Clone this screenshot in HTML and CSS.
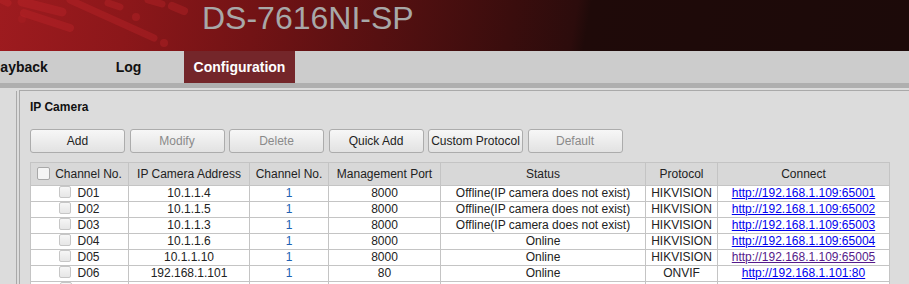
FILE: index.html
```html
<!DOCTYPE html>
<html lang="en">
<head>
    <meta charset="UTF-8">
    <title>DS-7616NI-SP</title>
    <link rel="stylesheet" href="styles.css">
</head>
<body>
    <header class="banner">
        <svg class="streaks" width="220" height="51" viewBox="0 0 220 51">
            <g stroke="#c8282d" stroke-linecap="round" fill="none" opacity="0.32">
                <line x1="22" y1="2" x2="62" y2="12" stroke-width="9"/>
                <line x1="24" y1="13" x2="70" y2="28" stroke-width="8"/>
                <line x1="70" y1="0" x2="154" y2="38" stroke-width="7"/>
                <line x1="108" y1="3" x2="120" y2="7" stroke-width="7"/>
                <line x1="148" y1="0" x2="162" y2="4" stroke-width="7"/>
                <line x1="172" y1="6" x2="184" y2="11" stroke-width="8"/>
                <line x1="2" y1="0" x2="8" y2="3" stroke-width="7"/>
            </g>
            <g fill="#c8282d" opacity="0.32">
                <circle cx="136" cy="17" r="4"/>
                <circle cx="164" cy="43" r="4"/>
                <circle cx="22" cy="19" r="4" opacity="0.5"/>
            </g>
        </svg>
        <h1 class="model">DS-7616NI-SP</h1>
    </header>

    <nav class="menu">
        <a class="tab">Playback</a>
        <a class="tab">Log</a>
        <a class="tab active">Configuration</a>
    </nav>
    <div class="menu-shadow"></div>

    <div class="workspace">
        <aside class="side"></aside>
        <main class="panel">
            <h2 class="panel-title">IP Camera</h2>
            <div class="toolbar">
                <button class="btn">Add</button>
                <button class="btn" disabled>Modify</button>
                <button class="btn" disabled>Delete</button>
                <button class="btn">Quick Add</button>
                <button class="btn">Custom Protocol</button>
                <button class="btn" disabled>Default</button>
            </div>
            <table class="cam-table">
                <colgroup>
                    <col style="width:98px">
                    <col style="width:121px">
                    <col style="width:79px">
                    <col style="width:112px">
                    <col style="width:205px">
                    <col style="width:72px">
                    <col style="width:172px">
                </colgroup>
                <thead>
                    <tr>
                        <th><span class="cb cb-head"></span>Channel No.</th>
                        <th>IP Camera Address</th>
                        <th>Channel No.</th>
                        <th>Management Port</th>
                        <th>Status</th>
                        <th>Protocol</th>
                        <th>Connect</th>
                    </tr>
                </thead>
                <tbody>
                    <tr>
                        <td><span class="cb"></span>D01</td>
                        <td>10.1.1.4</td>
                        <td class="chan">1</td>
                        <td>8000</td>
                        <td>Offline(IP camera does not exist)</td>
                        <td>HIKVISION</td>
                        <td class="connect"><a class="link">http://192.168.1.109:65001</a></td>
                    </tr>
                    <tr>
                        <td><span class="cb"></span>D02</td>
                        <td>10.1.1.5</td>
                        <td class="chan">1</td>
                        <td>8000</td>
                        <td>Offline(IP camera does not exist)</td>
                        <td>HIKVISION</td>
                        <td class="connect"><a class="link">http://192.168.1.109:65002</a></td>
                    </tr>
                    <tr>
                        <td><span class="cb"></span>D03</td>
                        <td>10.1.1.3</td>
                        <td class="chan">1</td>
                        <td>8000</td>
                        <td>Offline(IP camera does not exist)</td>
                        <td>HIKVISION</td>
                        <td class="connect"><a class="link">http://192.168.1.109:65003</a></td>
                    </tr>
                    <tr>
                        <td><span class="cb"></span>D04</td>
                        <td>10.1.1.6</td>
                        <td class="chan">1</td>
                        <td>8000</td>
                        <td>Online</td>
                        <td>HIKVISION</td>
                        <td class="connect"><a class="link">http://192.168.1.109:65004</a></td>
                    </tr>
                    <tr>
                        <td><span class="cb"></span>D05</td>
                        <td>10.1.1.10</td>
                        <td class="chan">1</td>
                        <td>8000</td>
                        <td>Online</td>
                        <td>HIKVISION</td>
                        <td class="connect"><a class="link visited">http://192.168.1.109:65005</a></td>
                    </tr>
                    <tr>
                        <td><span class="cb"></span>D06</td>
                        <td>192.168.1.101</td>
                        <td class="chan">1</td>
                        <td>80</td>
                        <td>Online</td>
                        <td>ONVIF</td>
                        <td class="connect"><a class="link">http://192.168.1.101:80</a></td>
                    </tr>
                    <tr>
                        <td><span class="cb cb-empty"></span></td>
                        <td></td>
                        <td class="chan"></td>
                        <td></td>
                        <td></td>
                        <td></td>
                        <td class="connect"></td>
                    </tr>
                </tbody>
            </table>
        </main>
    </div>
</body>
</html>
```
FILE: styles.css
```css
:root {
    --panel-bg: #dcdcdc;
    --line: #a9a9a9;
    --cell-line: #c4c4c4;
    --text: #222;
}
html, body {
    margin: 0;
    height: 100%;
    overflow: hidden;
}
body {
    font-family: "Liberation Sans", Arial, sans-serif;
    font-size: 12px;
    color: var(--text);
    background: var(--panel-bg);
}
.banner {
    position: relative;
    height: 51px;
    background: linear-gradient(100deg, #9e1b1f 0%, #8c171a 14%, #721315 28%, #561011 42%, #3a0d0d 56%, #2c0c0c 63%, #1f0a09 64.5%, #1c0a09 100%);
    overflow: hidden;
}
.streaks {
    position: absolute;
    left: 0;
    top: 0;
}
.model {
    position: relative;
    margin: 0;
    padding-left: 202px;
    font-size: 32px;
    font-weight: 400;
    line-height: 36px;
    color: #a8a8a8;
}
.menu {
    display: flex;
    height: 32px;
    margin-left: -38px;
    background: #cccccc;
}
.tab {
    width: 111px;
    text-align: center;
    font-size: 14px;
    font-weight: 700;
    line-height: 32px;
    color: #111;
}
.tab.active {
    background: #74262a;
    color: #fff;
}
.menu-shadow {
    height: 5px;
    background: #afafaf;
}
.workspace {
    display: flex;
    padding-top: 2px;
    height: 220px;
}
.side {
    width: 16px;
    border-right: 1px solid var(--line);
    margin-top: 1px;
}
.panel {
    flex: 1;
    margin-left: 2px;
    border-left: 1px solid var(--line);
    border-top: 1px solid var(--line);
    padding: 9px 0 0 10px;
}
.panel-title {
    margin: 0;
    font-size: 12px;
    font-weight: 700;
    line-height: 14px;
    color: #111;
}
.toolbar {
    display: flex;
    gap: 4.5px;
    margin-top: 15px;
}
.btn {
    width: 95px;
    height: 24px;
    padding: 0;
    font-family: inherit;
    font-size: 12px;
    color: #222;
    background: linear-gradient(#f7f7f7, #e2e2e2);
    border: 1px solid #acacac;
    border-radius: 3px;
}
.btn:disabled {
    color: #8a8a8a;
}
.cam-table {
    margin-top: 9px;
    border-collapse: collapse;
    table-layout: fixed;
    width: 859px;
}
.cam-table th, .cam-table td {
    padding: 0;
    text-align: center;
    white-space: nowrap;
    overflow: hidden;
    border: 1px solid var(--cell-line);
}
.cam-table th {
    height: 22px;
    font-weight: 400;
    color: #222;
    background: #d8d8d8;
}
.cam-table td {
    height: 15px;
    line-height: 15px;
    background: #fff;
}
.cam-table td.chan {
    color: #2061b2;
}
.cb {
    display: inline-block;
    width: 10px;
    height: 10px;
    margin-right: 6px;
    vertical-align: -1px;
    border: 1px solid #c6c6c6;
    border-radius: 2px;
    background: linear-gradient(#f6f6f6, #e6e6e6);
}
.cb-empty {
    margin-right: 28px;
}
.cb-head {
    width: 11px;
    height: 11px;
    margin-right: 5px;
    vertical-align: -2px;
    border-color: #a8a8a8;
    background: #f4f4f4;
}
.link {
    color: #0000ee;
    text-decoration: underline;
}
.link.visited {
    color: #551a8b;
}
```
